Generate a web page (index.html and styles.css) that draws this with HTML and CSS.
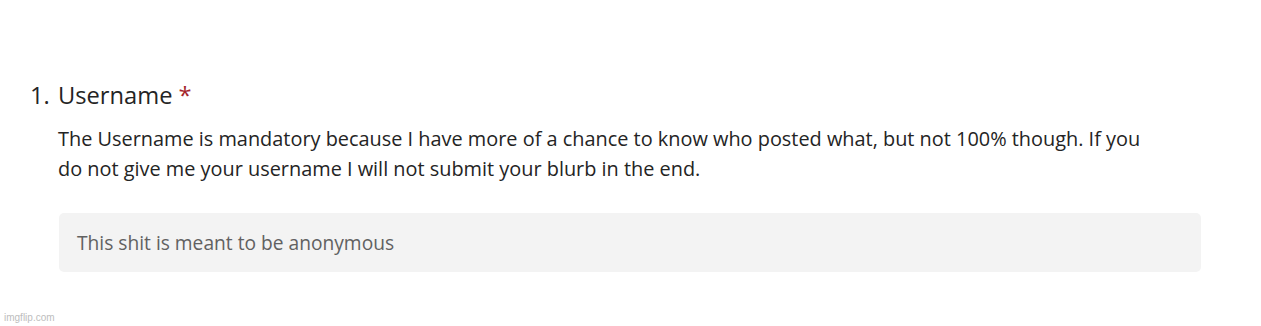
FILE: index.html
```html
<!DOCTYPE html>
<html>
<head>
<meta charset="utf-8">
<link rel="stylesheet" href="styles.css">
</head>
<body>
<div class="page">
  <div class="question">
    <div class="title">
      <span class="num">1.</span>
      <span class="label">Username</span>
      <span class="req">*</span>
    </div>
    <div class="body">
      <p class="desc">The Username is mandatory because I have more of a chance to know who posted what, but not 100% though. If you do not give me your username I will not submit your blurb in the end.</p>
      <div class="input">This shit is meant to be anonymous</div>
    </div>
  </div>
  <div class="watermark">imgflip.com</div>
</div>
</body>
</html>
```
FILE: styles.css
```css
html, body {
  margin: 0;
  padding: 0;
  background: #ffffff;
}
.page {
  width: 1261px;
  height: 326px;
  position: relative;
  font-family: "Open Sans", "Noto Sans", sans-serif;
  color: #242424;
}
.question {
  padding: 80px 0 0 30px;
}
.title {
  display: flex;
  align-items: baseline;
  font-size: 23.7px;
  line-height: 30px;
}
.num {
  width: 28px;
}
.req {
  color: #a4262c;
  margin-left: 6px;
}
.body {
  padding-left: 28px;
}
.desc {
  margin: 14px 0 0 0;
  width: 1100px;
  font-size: 19.9px;
  line-height: 29.5px;
}
.input {
  margin: 30px 0 0 1px;
  width: 1142px;
  height: 59px;
  box-sizing: border-box;
  background: #f3f3f3;
  border-radius: 5px;
  padding: 0 18px;
  display: flex;
  align-items: center;
  font-size: 19.2px;
  color: #616161;
}
.watermark {
  position: absolute;
  left: 4px;
  bottom: 3px;
  font-family: "Liberation Sans", Arial, sans-serif;
  font-size: 10px;
  color: #bdbdbd;
}
```
